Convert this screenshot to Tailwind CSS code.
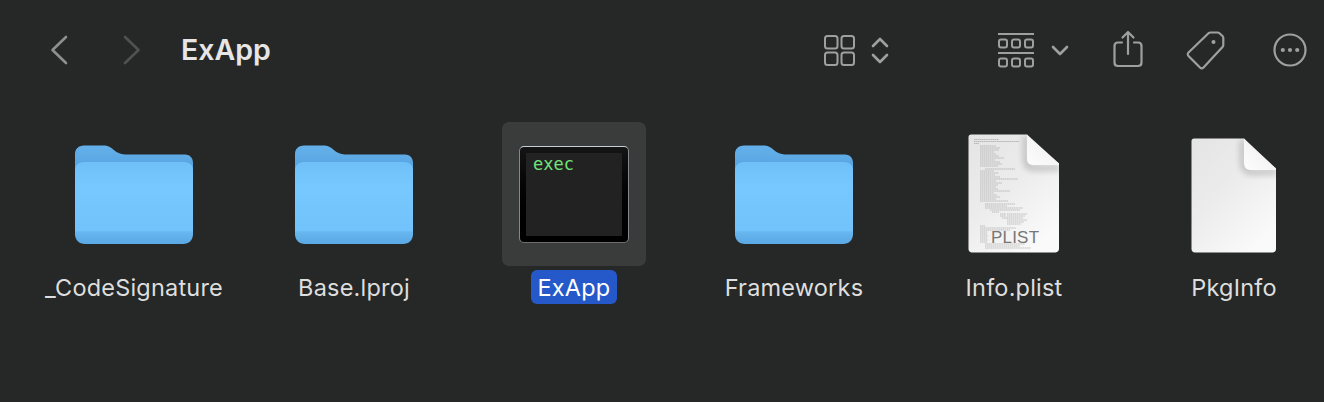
<!DOCTYPE html>
<html>
<head>
<meta charset="utf-8">
<script src="https://cdn.jsdelivr.net/npm/@tailwindcss/browser@4"></script>
</head>
<body class="m-0 bg-[#262827]">
<svg width="0" height="0" class="absolute">
  <defs>
    <linearGradient id="fb" x1="0" y1="0" x2="0" y2="1"><stop offset="0" stop-color="#64b0ea"/><stop offset="1" stop-color="#4c9bdb"/></linearGradient>
    <linearGradient id="ff" x1="0" y1="0" x2="0" y2="1"><stop offset="0" stop-color="#6fc0f8"/><stop offset=".3" stop-color="#76c8fe"/><stop offset=".84" stop-color="#72c3fb"/><stop offset=".85" stop-color="#68b7f0"/><stop offset="1" stop-color="#5aa8e4"/></linearGradient>
    <linearGradient id="pg" x1="0" y1="0" x2=".7" y2="1"><stop offset="0" stop-color="#e4e4e4"/><stop offset=".5" stop-color="#ececec"/><stop offset="1" stop-color="#fafafa"/></linearGradient>
    <linearGradient id="fd" x1="0" y1="1" x2="1" y2="0"><stop offset="0" stop-color="#fdfdfd"/><stop offset="1" stop-color="#ececec"/></linearGradient>
    <filter id="sh" x="-40%" y="-40%" width="180%" height="180%"><feGaussianBlur stdDeviation="3"/></filter>
    <clipPath id="pc1"><path d="M3 .5H59L91 29.500V115C91 117 89 118.500 87 118.500H4C2 118.500 .5 117 .5 115V3C.5 1.500 1.500 .5 3 .5Z"/></clipPath>
    <clipPath id="pc2"><path d="M3 .5H53L85 30.500V111C85 113 83.500 114.500 81.500 114.500H4C2 114.500 .5 113 .5 111V3C.5 1.500 1.500 .5 3 .5Z"/></clipPath>
    <symbol id="folder" viewBox="0 0 118 99">
      <path d="M0 9C0 4 3.500 .5 9 .5H30C37 .5 40 9.500 50 9.500H110C115 9.500 118 13 118 18V40H0Z" fill="url(#fb)"/>
      <path d="M0 25C0 20 4 17 9 17H109C114 17 118 20 118 25V89C118 95 114 99 108 99H10C4 99 0 95 0 89Z" fill="url(#ff)"/>
    </symbol>
  </defs>
</svg>
<div class="flex w-[1324px] h-[402px] overflow-hidden bg-[#262827] font-['Inter','Liberation_Sans',sans-serif]">
  <div class="w-[2px] bg-[#2e2e2e]"></div>
  <div class="w-[2px] bg-black"></div>
  <main class="flex-1 flex flex-col">
    <header class="h-[100px] flex items-center text-[#9f9f9f]">
      <svg class="ml-[50px]" width="18" height="30" viewBox="0 0 18 30" fill="none" stroke="#8f8f8f" stroke-width="2.600" stroke-linecap="round" stroke-linejoin="round"><path d="M16 2 2.500 15 16 28"/></svg>
      <svg class="ml-[55px]" width="18" height="30" viewBox="0 0 18 30" fill="none" stroke="#515151" stroke-width="2.600" stroke-linecap="round" stroke-linejoin="round"><path d="M2 2 15.500 15 2 28"/></svg>
      <h1 class="ml-[40px] text-[28.500px] leading-none font-semibold text-[#e6e6e6]">ExApp</h1>
      <svg class="ml-[553px]" width="31" height="31" viewBox="0 0 31 31" fill="none" stroke="currentColor" stroke-width="2"><rect x="1" y="1" width="12.500" height="12.500" rx="2.500"/><rect x="17.500" y="1" width="12.500" height="12.500" rx="2.500"/><rect x="1" y="17.500" width="12.500" height="12.500" rx="2.500"/><rect x="17.500" y="17.500" width="12.500" height="12.500" rx="2.500"/></svg>
      <svg class="ml-[16px]" width="18" height="27" viewBox="0 0 18 27" fill="none" stroke="currentColor" stroke-width="2.600" stroke-linecap="round" stroke-linejoin="round"><path d="M2 9 9 2 16 9M2 18 9 25 16 18"/></svg>
      <svg class="ml-[109px]" width="37" height="35" viewBox="0 0 37 35" fill="none" stroke="currentColor" stroke-width="2"><path d="M0 1H36M0 20H36" stroke-width="2.200"/><rect x="1" y="6.500" width="8" height="8" rx="2"/><rect x="14" y="6.500" width="8" height="8" rx="2"/><rect x="27" y="6.500" width="8" height="8" rx="2"/><rect x="1" y="25.500" width="8" height="8" rx="2"/><rect x="14" y="25.500" width="8" height="8" rx="2"/><rect x="27" y="25.500" width="8" height="8" rx="2"/></svg>
      <svg class="ml-[16px] mt-[1px]" width="18" height="11" viewBox="0 0 18 11" fill="none" stroke="currentColor" stroke-width="2.600" stroke-linecap="round" stroke-linejoin="round"><path d="M2 2 9 9 16 2"/></svg>
      <svg class="ml-[44px] mb-[3px]" width="30" height="38" viewBox="0 0 30 38" fill="none" stroke="currentColor" stroke-width="2.200" stroke-linecap="round" stroke-linejoin="round"><path d="M9 12.500H5C2.800 12.500 1.500 14 1.500 16V32.500C1.500 34.500 2.800 36 5 36H25C27.200 36 28.500 34.500 28.500 32.500V16C28.500 14 27.200 12.500 25 12.500H21"/><path d="M15 24V2M9.500 7.500 15 2 20.500 7.500"/></svg>
      <svg class="ml-[43px] mt-[1px]" width="39" height="39" viewBox="0 0 39 39" fill="none" stroke="currentColor" stroke-width="2.200" stroke-linejoin="round"><path d="M2.500 21.500 22.500 2.200C23 1.800 23.500 1.500 24.500 1.500H31.500C32.500 1.500 33 1.700 33.500 2.200L36.500 5C37 5.500 37.300 6 37.300 7V14C37.300 15 37 15.500 36.500 16L17.500 36.500C16.500 37.500 15 37.500 14 36.500L2.500 25C1.500 24 1.500 22.500 2.500 21.500Z"/><circle cx="27.500" cy="11" r="2" fill="currentColor" stroke="none"/></svg>
      <svg class="ml-[48px]" width="34" height="34" viewBox="0 0 34 34" fill="none" stroke="currentColor" stroke-width="2.200"><circle cx="17" cy="17" r="15.500"/><circle cx="9.800" cy="17" r="2.100" fill="currentColor" stroke="none"/><circle cx="17" cy="17" r="2.100" fill="currentColor" stroke="none"/><circle cx="24.200" cy="17" r="2.100" fill="currentColor" stroke="none"/></svg>
    </header>
    <section class="pl-[24px] pt-[22px] grid grid-cols-[repeat(6,220px)] text-[23.500px] leading-[36px] tracking-[0.2px] text-[#dedede]">
      <div class="flex flex-col items-center gap-[4px]">
        <div class="w-[144px] h-[144px] flex items-center justify-center"><svg width="118" height="99"><use href="#folder"/></svg></div>
        <span class="h-[34px] px-[7px] whitespace-nowrap">_CodeSignature</span>
      </div>
      <div class="flex flex-col items-center gap-[4px]">
        <div class="w-[144px] h-[144px] flex items-center justify-center"><svg width="118" height="99"><use href="#folder"/></svg></div>
        <span class="h-[34px] px-[7px] whitespace-nowrap">Base.lproj</span>
      </div>
      <div class="flex flex-col items-center gap-[4px]">
        <div class="w-[144px] h-[144px] rounded-[7px] bg-[#3a3c3b] flex items-center justify-center">
          <div class="w-[110px] h-[97px] rounded-[5px] border-[1.500px] border-t-[#c4d0d6] border-x-[#82888c] border-b-[#6e6e6e] bg-gradient-to-b from-[#151515] to-black p-[6px]">
            <div class="h-full bg-[#222222] pl-[7px] pt-[1px] font-['DejaVu_Sans_Mono',monospace] text-[17px] leading-[20px] tracking-normal text-[#72e27a]">exec</div>
          </div>
        </div>
        <span class="h-[34px] px-[7px] rounded-[6px] bg-[#2559c9] text-white whitespace-nowrap">ExApp</span>
      </div>
      <div class="flex flex-col items-center gap-[4px]">
        <div class="w-[144px] h-[144px] flex items-center justify-center"><svg width="118" height="99"><use href="#folder"/></svg></div>
        <span class="h-[34px] px-[7px] whitespace-nowrap">Frameworks</span>
      </div>
      <div class="flex flex-col items-center gap-[4px]">
        <div class="w-[144px] h-[144px] flex items-center justify-center">
          <svg class="mb-[1px]" width="92" height="119" viewBox="0 0 92 119">
            <path d="M3 .5H59L91 29.500V115C91 117 89 118.500 87 118.500H4C2 118.500 .5 117 .5 115V3C.5 1.500 1.500 .5 3 .5Z" fill="url(#pg)"/>
            <path d="M6 5.500h25M6 7.500h45M6 9.500h5M12 12h16M12 14h20M12 16h19M12 18h14M12 20h16M12 22h19M12 24h24M12 26h15M12 28h20M12 30h22M12 32h18M17 35h30M12 37h14M12 39h18M12 41h15M12 43h20M12 45h38M12 47h16M12 49h22M12 51h18M12 53h16M12 55h18M12 57h30M12 59h14M12 61h17M12 63h20M12 65h16M12 67h28M17 70h30M17 72h22M17 74h38M22 76h30M24 78h7M32 80h6M32 82h6M34 84h5M39 80h20M39 82h18M39 84h16M39 86h20M39 88h17M39 90h14M12 92h5M12 94h36M12 96h30M12 98h7M12 100h7M12 102h8M12 104h7M12 106h8M12 108h7M17 110h40M17 112h35M17 114h46" stroke="#666" stroke-width=".6" stroke-dasharray="1.500 .4" opacity=".6" fill="none"/>
            <text x="23" y="108.500" font-size="17" fill="#767676" class="font-['Liberation_Sans',sans-serif]">PLIST</text>
            <g clip-path="url(#pc1)"><path d="M58 2V25C58 31 61 34 66 34H92" fill="none" stroke="#000" stroke-width="5" opacity=".22" filter="url(#sh)"/></g>
            <path d="M59 .5C64 6 80 20 91 29.500V31H66C61 31 59 29 59 24Z" fill="url(#fd)"/>
          </svg>
        </div>
        <span class="h-[34px] px-[7px] whitespace-nowrap">Info.plist</span>
      </div>
      <div class="flex flex-col items-center gap-[4px]">
        <div class="w-[144px] h-[144px] flex items-center justify-center">
          <svg class="mt-[2px]" width="86" height="115" viewBox="0 0 86 115">
            <path d="M3 .5H53L85 30.500V111C85 113 83.500 114.500 81.500 114.500H4C2 114.500 .5 113 .5 111V3C.5 1.500 1.500 .5 3 .5Z" fill="url(#pg)"/>
            <g clip-path="url(#pc2)"><path d="M52 2V24C52 30 55 34 61 34H86" fill="none" stroke="#000" stroke-width="5" opacity=".22" filter="url(#sh)"/></g>
            <path d="M53 .5C58 6 74 21 85 30.500V32H60C55 32 53 29 53 24Z" fill="url(#fd)"/>
          </svg>
        </div>
        <span class="h-[34px] px-[7px] whitespace-nowrap">PkgInfo</span>
      </div>
    </section>
  </main>
</div>
</body>
</html>
